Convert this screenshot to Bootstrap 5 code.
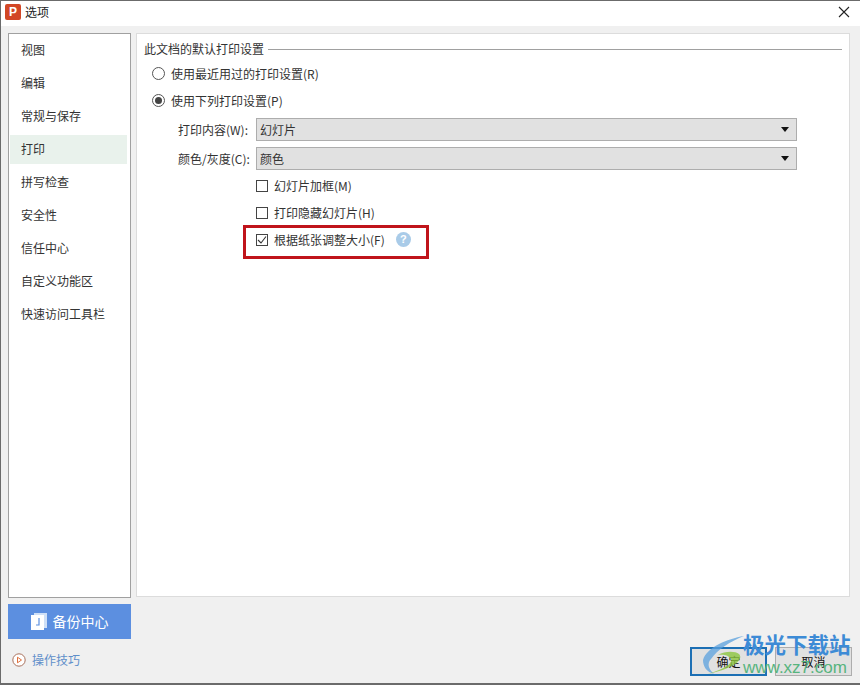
<!DOCTYPE html>
<html lang="zh-CN">
<head>
  <meta charset="UTF-8">
  <title>选项</title>
  <link href="https://cdn.jsdelivr.net/npm/bootstrap@5.3.3/dist/css/bootstrap.min.css" rel="stylesheet">
  <style>
    html, body { margin: 0; height: 685px; overflow: hidden; }
    body, button, select { font-family: "Noto Sans CJK SC", "Liberation Sans", sans-serif; font-size: 12px; color: #333; }
    .opt-window { height: 685px; width: 860px; background: #f0f0f0; border: 1px solid #6b6b6b; border-width: 1px 0 2px 1px; position: relative; }
    .opt-title { height: 25px; background: #fff; padding: 0 0 3px 4px; font-size: 12px; color: #222; }
    .opt-logo { width: 16px; height: 16px; background: #d24726; border-radius: 2px; color: #fff; font: bold 12px/16px "Liberation Sans", sans-serif; text-align: center; margin-right: 4px; }
    .opt-close { width: 14px; height: 14px; margin-right: 9px; }
    .opt-content { padding: 7px 9px 0 7px; gap: 5px; }
    .opt-left { width: 123px; }
    .opt-side { height: 565px; background: #fff; border: 1px solid #a0a0a0; padding: 2px 3px 0 1px; }
    .opt-navitem { height: 29px; line-height: 28px; margin-bottom: 4px; padding-left: 11px; }
    .opt-navitem.on { background: #e9f2ec; }
    .opt-backup { height: 35px; margin-top: 6px; background: #5c8fe0; color: #fff; font-size: 14px; gap: 6px; }
    .opt-tips { margin-top: 12px; padding-left: 4px; color: #5f8fca; height: 18px; gap: 6px; }
    .opt-main { width: 714px; height: 564px; background: #fff; border: 1px solid #dcdcdc; padding: 7px 7px 0 7px; }
    .opt-legend { height: 16px; gap: 4px; }
    .opt-legend hr { flex: 1; margin: 0; border: 0; border-top: 1px solid #a0a0a0; opacity: 1; }
    .opt-radio { height: 27px; padding-left: 8px; gap: 6px; }
    .opt-radiofirst { margin-top: 3px; }
    .opt-dot { width: 13px; height: 13px; border: 1px solid #555; border-radius: 50%; background: #fff; display: flex; align-items: center; justify-content: center; }
    .opt-dot i { width: 7px; height: 7px; border-radius: 50%; background: #444; }
    .opt-field { padding-left: 34px; height: 23px; margin-top: 4px; }
    .opt-field + .opt-field { margin-top: 6px; }
    .opt-field label { width: 78px; }
    .opt-pick { width: 541px; height: 23px; background: #e1e1e1; border: 1px solid #adadad; padding: 0 7px 0 3px; }
    .opt-caret { width: 0; height: 0; border: 4px solid transparent; border-top: 5px solid #111; border-bottom: 0; }
    .opt-check { height: 27px; padding-left: 112px; gap: 6px; position: relative; }
    .opt-checkfirst { margin-top: 2px; }
    .opt-box { width: 12px; height: 12px; border: 1px solid #444; background: #fff; }
    .opt-box svg { display: block; }
    .opt-help { width: 15px; height: 15px; border-radius: 50%; background: #a9cbe8; color: #fff; font: bold 11px/15px "Liberation Sans", sans-serif; text-align: center; margin-left: 5px; }
    .opt-red { position: absolute; left: 99px; top: -1px; width: 186px; height: 34px; border: 3px solid #c0141b; }
    .opt-foot { padding-right: 8px; gap: 8px; position: absolute; right: 0; bottom: 7px; }
    .opt-btn { width: 77px; height: 29px; background: #e1e1e1; border: 1px solid #adadad; color: #111; font-size: 12px; padding: 0; border-radius: 0; }
    .opt-btn.primary { border: 2px solid #1c6fb4; }
    .opt-mark { position: absolute; left: 702px; top: 632px; width: 155px; height: 50px; pointer-events: none; }
    .opt-mark b { position: absolute; left: 40px; top: -4px; font-size: 21.5px; line-height: 30px; color: #3d8bd6; white-space: nowrap; }
    .opt-mark span { position: absolute; left: 40px; top: 25px; font: 17px/20px "Liberation Sans", sans-serif; color: #57b47e; white-space: nowrap; }
    .opt-mark svg { position: absolute; left: 0; top: 0; }
  </style>
</head>
<body>
  <div class="opt-window d-flex flex-column">
    <div class="opt-title d-flex align-items-center">
      <div class="opt-logo">P</div>
      <div class="flex-grow-1">选项</div>
      <svg class="opt-close" viewBox="0 0 14 14"><path d="M2 2l10 10M12 2L2 12" stroke="#222" stroke-width="1.1" fill="none"/></svg>
    </div>

    <div class="opt-content d-flex">
      <div class="opt-left">
        <div class="opt-side">
          <div class="opt-navitem">视图</div>
          <div class="opt-navitem">编辑</div>
          <div class="opt-navitem">常规与保存</div>
          <div class="opt-navitem on">打印</div>
          <div class="opt-navitem">拼写检查</div>
          <div class="opt-navitem">安全性</div>
          <div class="opt-navitem">信任中心</div>
          <div class="opt-navitem">自定义功能区</div>
          <div class="opt-navitem">快速访问工具栏</div>
        </div>
        <div class="opt-backup d-flex align-items-center justify-content-center">
          <svg width="16" height="17" viewBox="0 0 16 17"><path d="M3 0h13v15H3z" fill="#cfe0f7"/><path d="M0 2h13v15H0z" fill="#fff"/><path d="M8 5v7H5" stroke="#5c8fe0" stroke-width="1.2" fill="none"/></svg>
          <span>备份中心</span>
        </div>
        <div class="opt-tips d-flex align-items-center">
          <svg width="14" height="14" viewBox="0 0 14 14"><circle cx="7" cy="7" r="6.2" fill="#fff" stroke="#a8705c"/><path d="M5.5 4.2l4 2.8-4 2.8z" fill="none" stroke="#e0703c"/></svg>
          <span>操作技巧</span>
        </div>
      </div>

      <div class="opt-main">
        <div class="opt-legend d-flex align-items-center">
          <span>此文档的默认打印设置</span>
          <hr>
        </div>
        <div class="opt-radio opt-radiofirst d-flex align-items-center">
          <span class="opt-dot"></span><span>使用最近用过的打印设置(R)</span>
        </div>
        <div class="opt-radio d-flex align-items-center">
          <span class="opt-dot"><i></i></span><span>使用下列打印设置(P)</span>
        </div>
        <div class="opt-field d-flex align-items-center">
          <label>打印内容(W):</label>
          <div class="opt-pick d-flex align-items-center justify-content-between"><span>幻灯片</span><span class="opt-caret"></span></div>
        </div>
        <div class="opt-field d-flex align-items-center">
          <label>颜色/灰度(C):</label>
          <div class="opt-pick d-flex align-items-center justify-content-between"><span>颜色</span><span class="opt-caret"></span></div>
        </div>
        <div class="opt-check opt-checkfirst d-flex align-items-center">
          <span class="opt-box"></span><span>幻灯片加框(M)</span>
        </div>
        <div class="opt-check d-flex align-items-center">
          <span class="opt-box"></span><span>打印隐藏幻灯片(H)</span>
        </div>
        <div class="opt-check d-flex align-items-center">
          <span class="opt-box"><svg width="10" height="10" viewBox="0 0 10 10"><path d="M1 5l3 3 5-6.5" stroke="#333" stroke-width="1.1" fill="none"/></svg></span>
          <span>根据纸张调整大小(F)</span>
          <span class="opt-help">?</span>
          <div class="opt-red"></div>
        </div>
      </div>
    </div>

    <div class="opt-foot d-flex">
      <button class="btn opt-btn primary">确定</button>
      <button class="btn opt-btn">取消</button>
    </div>

    <div class="opt-mark">
      <svg width="46" height="46" viewBox="0 0 46 46">
        <path d="M41 3C24 6 4 14 0 27C0 34 4 39 11 41C5 36 4 30 8 26C14 17 28 8 41 3z" fill="#5aa0dd" opacity=".75"/>
        <path d="M15 22C22 18 32 18 36 21C40 25 36 34 5 41C22 36 30 30 28 26C26 22 20 21 15 22z" fill="#8cc63f" opacity=".8"/>
      </svg>
      <b>极光下载站</b>
      <span>www.xz7.com</span>
    </div>
  </div>
</body>
</html>
